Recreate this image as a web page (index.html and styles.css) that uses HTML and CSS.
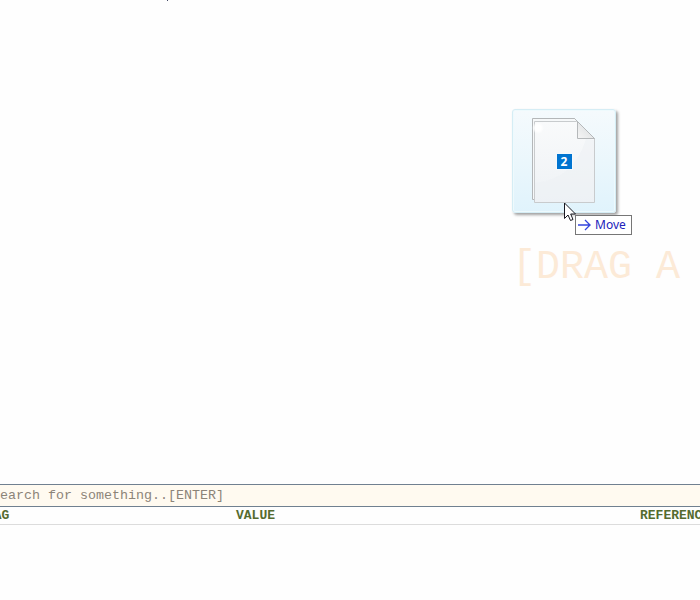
FILE: index.html
```
<!DOCTYPE html>
<html lang="en">
<head>
<meta charset="utf-8">
<title>Search</title>
<link rel="stylesheet" href="styles.css">
</head>
<body>
<div class="app">
  <main class="dropzone">
    <p class="hint">[DRAG A</p>
  </main>
  <input class="search" type="text" aria-label="Search" placeholder="Search for something..[ENTER]">
  <table class="results">
    <thead>
      <tr>
        <th class="col-tag" scope="col">TAG</th>
        <th class="col-value" scope="col">VALUE</th>
        <th scope="col">REFERENCE</th>
      </tr>
    </thead>
  </table>
</div>
<span class="speck"></span>
<div class="ghost">
  <svg class="pages" width="66" height="88" viewBox="0 0 66 88" aria-hidden="true">
    <defs>
      <linearGradient id="paper" x1="0" y1="0" x2="0" y2="1">
        <stop offset="0" stop-color="#f9fafb"/>
        <stop offset="1" stop-color="#eef2f5"/>
      </linearGradient>
      <linearGradient id="fold" x1="0" y1="1" x2="1" y2="0">
        <stop offset="0" stop-color="#f8f8f8"/>
        <stop offset="1" stop-color="#d4d7d9"/>
      </linearGradient>
      <radialGradient id="shine">
        <stop offset="0.5" stop-color="#fff"/>
        <stop offset="1" stop-color="#fff" stop-opacity="0"/>
      </radialGradient>
    </defs>
    <path d="M1.5 1.5H43.5L63.5 21.5V82.5H1.5Z" fill="#f6f8f9" stroke="#b4b7b9"/>
    <path d="M3.5 4.5H45.5L63.5 21.5V85.5H3.5Z" fill="url(#paper)" stroke="#c8cbcd"/>
    <path d="M4 66Q43 62 55 22L63 23V85H4Z" fill="#edf1f4" opacity=".55"/>
    <circle cx="7" cy="11" r="6" fill="url(#shine)"/>
    <path d="M43.5 1.5L63.5 21.5H46.5V4.5Z" fill="url(#fold)" stroke="#b5b8ba"/>
  </svg>
  <span class="count">2</span>
</div>
<div class="action">
  <svg width="14" height="12" viewBox="0 0 14 12" aria-hidden="true"><path d="M0 6H12.5M7 1L12 6L7 11" fill="none" stroke="#3344dd" stroke-width="1.3"/></svg>
  <span>Move</span>
</div>
<svg class="cursor" width="13" height="20" viewBox="0 0 13 20" aria-hidden="true"><path d="M0.5 1V16.5L4 13L6.5 18.5L9 17.5L6.7 12H11.5Z" fill="#fff" stroke="#181820"/></svg>
</body>
</html>
```
FILE: styles.css
```
* {
  box-sizing: border-box;
}

body {
  margin: 0;
  min-height: 100vh;
  overflow: hidden;
  background: #fefefe;
  font-family: "Courier New", "Liberation Mono", monospace;
}

/* The sheet bleeds past the left edge of the window. */
.app {
  display: flex;
  flex-direction: column;
  min-height: 100vh;
  margin-left: -16px;
}

.dropzone {
  display: flex;
  justify-content: flex-end;
  padding: 244px 20px 192px 0;
}

.hint {
  margin: 0;
  color: #fcead7;
  font-size: 40px;
  line-height: 48px;
}

.search {
  width: 100%;
  height: 23px;
  padding: 0 8px;
  border: 0;
  border-top: 1px solid #708090;
  border-bottom: 1px solid #708090;
  border-radius: 0;
  outline: 0;
  background: #fffaf0;
  font-family: inherit;
}

.search::placeholder {
  color: #8c8478;
}

.results {
  width: 100%;
  table-layout: fixed;
  border-collapse: separate;
  border-spacing: 0;
}

.results th {
  height: 18px;
  padding: 0 0 0 2px;
  border-bottom: 1px solid #dcdcdc;
  color: #556b2f;
  font-size: 13px;
  font-weight: bold;
  line-height: 17px;
  text-align: left;
  white-space: nowrap;
}

.col-tag {
  width: 250px;
}

.col-value {
  width: 404px;
}

.speck {
  position: absolute;
  top: 0;
  left: 167px;
  width: 1px;
  height: 1px;
  background: #444a66;
}

.ghost {
  position: absolute;
  top: 109px;
  left: 512px;
  display: grid;
  place-items: center;
  width: 104px;
  height: 104px;
  border: 1px solid #d5edf5;
  border-radius: 3px;
  background: linear-gradient(#f5fafd, #ebf7fc 50%, #e0f3fc);
  box-shadow: inset 0 0 0 1px #eefafd, 2px 2px 3px #a0a0a0;
}

.pages,
.count {
  grid-area: 1 / 1;
}

.count {
  width: 15px;
  height: 15px;
  outline: 1px solid #f4f9fd;
  background: #0074d0;
  color: #fff;
  font: bold 12px/15px "Noto Sans", sans-serif;
  text-align: center;
}

.action {
  position: absolute;
  top: 215px;
  left: 575px;
  display: flex;
  align-items: center;
  gap: 3px;
  height: 20px;
  padding: 0 5px 0 2px;
  border: 1px solid #767676;
  background: #fff;
  color: #2222bb;
  font: 12px/18px "Noto Sans", sans-serif;
}

.cursor {
  position: absolute;
  top: 202px;
  left: 564px;
}
```
